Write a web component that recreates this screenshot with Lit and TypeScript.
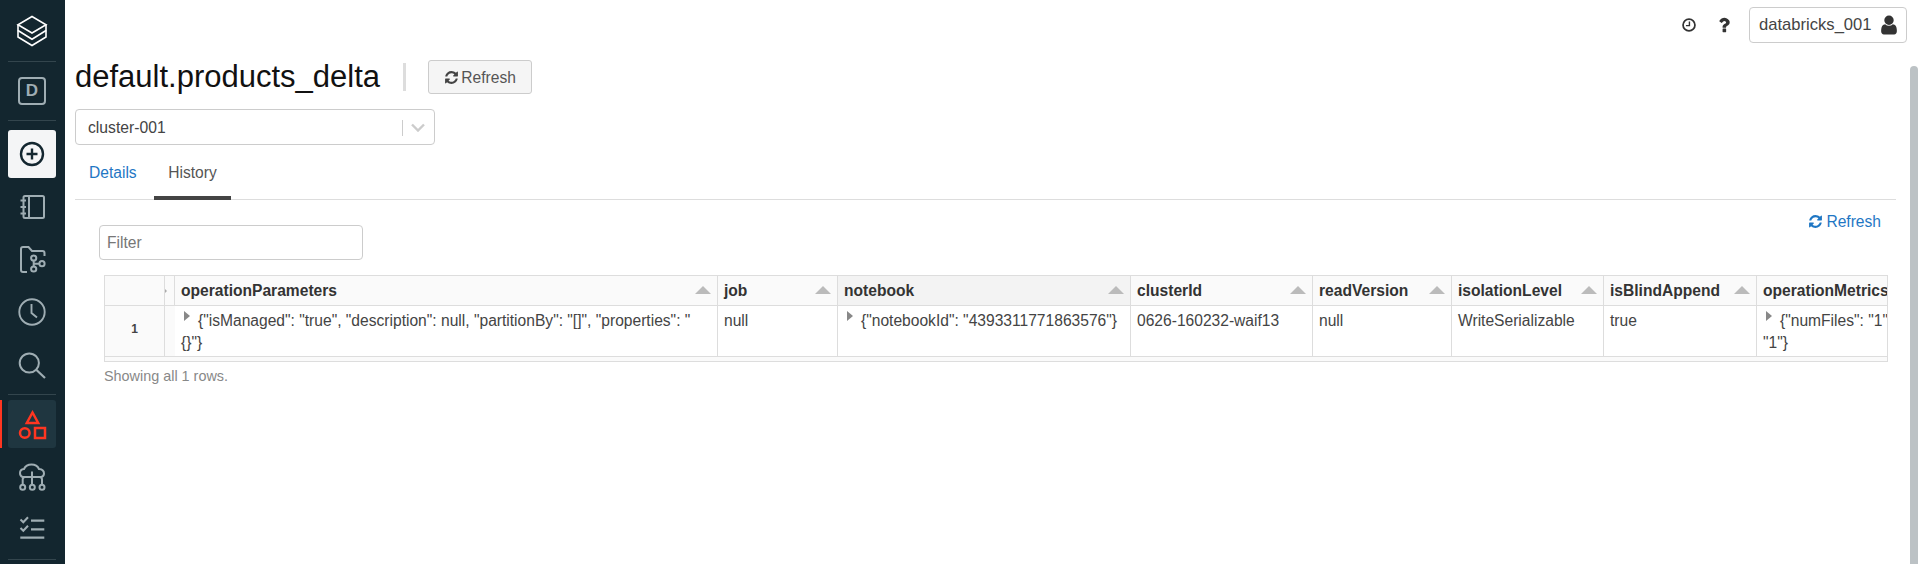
import { LitElement, html, css, svg } from "lit";
import { customElement } from "lit/decorators.js";

const REFRESH = "M1639 1056q0 5-1 7-64 268-268 434.5t-478 166.5q-146 0-282.5-55t-243.5-157l-129 129q-19 19-45 19t-45-19-19-45v-448q0-26 19-45t45-19h448q26 0 45 19t19 45-19 45l-137 137q71 66 161 102t187 36q134 0 250-65t186-179q11-17 53-117 8-23 30-23h192q13 0 22.5 9.5t9.5 22.5zm25-800v448q0 26-19 45t-45 19h-448q-26 0-45-19t-19-45 19-45l138-138q-148-137-349-137-134 0-250 65t-186 179q-11 17-53 117-8 23-30 23h-199q-13 0-22.5-9.5t-9.5-22.5v-7q65-268 270-434.5t480-166.5q146 0 284 55.5t245 156.5l130-129q19-19 45-19t45 19 19 45z";
const USER = "M1536 1399q0 109-62.5 187t-150.5 78h-854q-88 0-150.5-78t-62.5-187q0-85 8.5-160.5t31.5-152 58.5-131 94-89 134.5-34.5q131 128 313 128t313-128q76 0 134.5 34.5t94 89 58.5 131 31.5 152 8.5 160.5zm-256-887q0 159-112.5 271.5t-271.5 112.5-271.5-112.5-112.5-271.5 112.5-271.5 271.5-112.5 271.5 112.5 112.5 271.5z";
const QUESTION = "M1088 1256v240q0 16-12 28t-28 12h-240q-16 0-28-12t-12-28v-240q0-16 12-28t28-12h240q16 0 28 12t12 28zm316-600q0 54-15.5 101t-35 76.5-55 59.5-57.5 43.5-61 35.5q-41 23-68.5 65t-27.5 67q0 17-12 32.5t-28 15.5h-240q-15 0-25.5-18.5t-10.5-37.5v-45q0-83 65-156.5t143-108.5q59-27 84-56t25-76q0-42-46.5-74t-107.5-32q-65 0-108 29-35 25-107 115-13 16-31 16-12 0-25-8l-164-125q-13-10-15.5-25t5.5-28q160-266 464-266 80 0 161 31t146 83 106 127.5 41 158.5z";

const fa = (d: string, cls: string) => html`<svg class=${cls} viewBox="0 0 1792 1792" fill="currentColor"><path d=${d}></path></svg>`;

const ico = (body: unknown, cls = "ico") => html`<svg class=${cls} viewBox="0 0 32 32" fill="none" stroke="currentColor" stroke-width="2">${body}</svg>`;

const icons = {
  logo: svg`<path d="M16 1.5 L30 9.8 L16 18 L2 9.8 Z" stroke-width="1.6"/><path d="M2 9.8 V15.5 L16 24.3 L30 15.5 V9.8" stroke-width="1.6"/><path d="M2 15.5 V22 L16 30.5 L30 22 V15.5" stroke-width="1.6"/>`,
  plus: svg`<circle cx="16" cy="16" r="11" stroke-width="2.4"/><path d="M16 10.5 V21.5 M10.5 16 H21.5" stroke-width="2.4"/>`,
  book: svg`<rect x="7.5" y="5" width="20.5" height="22" rx="1.5"/><path d="M13 5 V27"/><path d="M4.5 9.5 H10 M4.5 16 H10 M4.5 22.5 H10"/>`,
  folder: svg`<path d="M11 29 H7 Q5 29 5 27 V6 Q5 4 7 4 H12.5 L16 8 H26.5 Q28.5 8 28.5 10 V13"/><circle cx="17.7" cy="15" r="2.6"/><circle cx="17.7" cy="26" r="2.6"/><circle cx="26" cy="20.7" r="2.6"/><path d="M17.7 17.6 V23.4 M18 20.7 H23.4"/>`,
  clock: svg`<circle cx="16" cy="16" r="12.7" stroke-width="1.9"/><path d="M15.5 8 V17 L21 21.5" stroke-width="1.9"/>`,
  search: svg`<circle cx="13.3" cy="15" r="9.6" stroke-width="2"/><path d="M20.5 22 L29 30" stroke-width="2.2"/>`,
  shapes: svg`<path d="M16.5 4.5 L22.2 15 H10.8 Z" stroke-width="2.5"/><circle cx="8.8" cy="25" r="4.8" stroke-width="2.5"/><rect x="19" y="20" width="10" height="10" stroke-width="2.5"/>`,
  cloud: svg`<path d="M6.5 16 Q4 15 4 12 Q4 8.5 8 8 Q10 3.5 15.5 3.5 Q21 3.5 23 8 Q28 8.5 28 12.5 Q28 15 25.5 16 H6.5 Z"/><path d="M16 10.5 V24 M6.7 23.5 V18.5 Q6.7 16 9 16 M26 23.5 V18.5 Q26 16 23.5 16"/><circle cx="6.7" cy="26.2" r="2.5"/><circle cx="16.3" cy="26.2" r="2.5"/><circle cx="26" cy="26.2" r="2.5"/>`,
  tasks: svg`<path d="M4.5 6.5 L7.3 9.3 L12 4.2 M4.5 15 L7.3 17.8 L12 12.7" stroke-width="2"/><path d="M15 7.7 H28.3 M15 16.3 H28.3 M4.3 24.7 H28.3" stroke-width="2.2"/>`,
};

const COLS: { name: string; hover?: boolean }[] = [
  { name: "operationParameters" },
  { name: "job" },
  { name: "notebook", hover: true },
  { name: "clusterId" },
  { name: "readVersion" },
  { name: "isolationLevel" },
  { name: "isBlindAppend" },
  { name: "operationMetrics" },
];

@customElement("app-root")
export class AppRoot extends LitElement {
  static styles = css`
    :host { display: block; height: 564px; overflow: hidden; font-family: "Liberation Sans", Arial, sans-serif; color: #333; background: #fff; position: relative; }
    * { box-sizing: border-box; }
    .page { display: flex; height: 564px; }
    .side { width: 65px; flex: none; background: #13262f; color: #9fadb3; display: flex; flex-direction: column; position: relative; }
    .sec { display: flex; flex-direction: column; align-items: center; gap: 4.5px; margin: 0 9px 0 8px; border-bottom: 1px solid #33454d; }
    .sec1 { height: 62px; justify-content: center; color: #fff; padding-top: 0; }
    .sec2 { height: 59px; justify-content: center; }
    .sec3 { height: 274px; padding-top: 9px; }
    .sec4 { height: 165px; padding-top: 5px; }
    .item { width: 48px; height: 48px; flex: none; display: flex; align-items: center; justify-content: center; border-radius: 3px; }
    .ico { width: 32px; height: 32px; display: block; }
    .logo { width: 32px; height: 32px; color: #fff; }
    .dbox { width: 28px; height: 28px; border: 2px solid #9fadb3; border-radius: 4px; font-size: 17px; font-weight: bold; display: flex; align-items: center; justify-content: center; color: #9fadb3; }
    .white { background: #f4f5f6; color: #13262f; }
    .act { background: #1f3640; color: #ff3621; }
    .redbar { position: absolute; left: 0; top: 400px; width: 2px; height: 48px; background: #ff3621; }
    .main { flex: 1; min-width: 0; position: relative; padding: 0 22px 0 10px; }
    .top { height: 50px; display: flex; align-items: center; justify-content: flex-end; margin-right: -11px; }
    .ti { color: #333; display: flex; align-items: center; justify-content: center; }
    .ti1 { width: 14px; height: 14px; margin-right: 17.5px; }
    .q { width: 20px; height: 20px; margin-right: 15.5px; }
    .user { width: 158px; height: 36px; border: 1px solid #ccc; border-radius: 4px; display: flex; align-items: center; justify-content: space-between; padding: 0 6px 0 9px; font-size: 16.6px; color: #444; }
    .user svg { width: 22px; height: 22px; color: #333; }
    .title { display: flex; align-items: center; height: 34px; margin-top: 10px; }
    h1 { margin: 0; font-size: 31px; font-weight: normal; color: #111; line-height: 34px; }
    .vr { width: 3px; height: 28px; background: #ddd; margin: 0 22px 0 23px; }
    .btn { width: 104px; height: 34px; border: 1px solid #ccc; border-radius: 3px; background: #f5f5f5; display: flex; align-items: center; justify-content: center; gap: 2px; font-size: 15.6px; color: #555; padding-top: 1px; }
    .btn svg { width: 15px; height: 15px; color: #444; }
    .sel { width: 360px; height: 36px; margin-top: 15px; border: 1px solid #ccc; border-radius: 4px; display: flex; align-items: center; padding: 1px 0 0 12px; font-size: 15.7px; color: #444; }
    .sel span { flex: 1; }
    .sel i { width: 1px; height: 16px; background: #ccc; }
    .sel svg { width: 14px; height: 9px; margin: 0 9px 0 8px; color: #ccc; }
    .tabs { display: flex; height: 55px; border-bottom: 1px solid #ddd; }
    .tab { font-size: 15.6px; padding: 19px 14px 0; height: 55px; color: #1f77c4; width: 79px; text-align: center; }
    .tab:first-child { width: 79px; padding-left: 14px; text-align: left; }
    .tab.on { color: #555; border-bottom: 4px solid #444; width: 77px; padding: 19px 0 0; }
    .tools { display: flex; justify-content: space-between; align-items: flex-start; padding: 13px 15px 0 24px; height: 75px; }
    .filter { width: 264px; height: 35px; margin-top: 12px; border: 1px solid #ccc; border-radius: 4px; padding-left: 7px; display: flex; align-items: center; font-size: 15.6px; color: #777; }
    .rf { display: flex; align-items: center; gap: 3px; font-size: 15.6px; color: #1f77c4; height: 17px; }
    .rf svg { width: 15px; height: 15px; }
    .table { margin-left: 29px; width: 1784px; border: 1px solid #ddd; height: 87px; overflow: hidden; font-size: 15.6px; display: grid; grid-template-columns: 60px 10px 543px 120px 293px 182px 139px 152px 153px 300px; grid-template-rows: 30px 51px; background: #fafafa; }
    .h { background: #fafafa; border-bottom: 1px solid #ddd; border-right: 1px solid #ddd; font-weight: bold; color: #333; display: flex; align-items: center; justify-content: space-between; padding: 0 6px; white-space: nowrap; }
    .h.hov { background: #f3f3f3; }
    .h:last-child { border-right: 0; }
    .h.narrow { padding: 0; }
    .sort { width: 0; height: 0; border-left: 8px solid transparent; border-right: 8px solid transparent; border-bottom: 8px solid #bbb; flex: none; margin-bottom: 2px; }
    .c { background: #fff; border-bottom: 1px solid #ddd; border-right: 1px solid #ddd; padding: 4px 6px 0; line-height: 22px; color: #444; white-space: nowrap; overflow: hidden; }
    .c.last { border-right: 0; }
    .num { background: #fafafa; font-size: 12px; font-weight: bold; text-align: center; padding: 12px 0 0 0; color: #444; }
    .narrow { background: #fafafa; }
    .tri { display: inline-block; width: 0; height: 0; border-top: 5px solid transparent; border-bottom: 5px solid transparent; border-left: 6px solid #888; margin: 0 8px 2px 3px; vertical-align: 3px; }
    .dot { display: block; width: 0; height: 0; border-top: 2px solid transparent; border-bottom: 2px solid transparent; border-left: 2px solid #aaa; }
    .foot { margin: 6px 0 0 29px; font-size: 14.4px; color: #888; }
    .scroll { position: absolute; top: 66px; right: 0; width: 8px; height: 498px; background: #bcc2c5; border-radius: 4px 4px 0 0; }
  `;

  render() {
    return html`
      <div class="page">
        <nav class="side">
          <div class="sec sec1">${ico(icons.logo, "logo")}</div>
          <div class="sec sec2"><div class="dbox">D</div></div>
          <div class="sec sec3">
            <div class="item white">${ico(icons.plus)}</div>
            <div class="item">${ico(icons.book)}</div>
            <div class="item">${ico(icons.folder)}</div>
            <div class="item">${ico(icons.clock)}</div>
            <div class="item">${ico(icons.search)}</div>
          </div>
          <div class="sec sec4">
            <div class="item act">${ico(icons.shapes)}</div>
            <div class="item">${ico(icons.cloud)}</div>
            <div class="item">${ico(icons.tasks)}</div>
          </div>
          <div class="redbar"></div>
        </nav>
        <main class="main">
          <div class="top">
            <svg class="ti ti1" viewBox="0 0 16 16" fill="none" stroke="currentColor" stroke-width="2"><circle cx="8" cy="8" r="6.8"/><path d="M8.5 4 V8.7 H4.5" stroke-width="1.6"/></svg>
            ${fa(QUESTION, "ti q")}
            <div class="user"><span>databricks_001</span>${fa(USER, "")}</div>
          </div>
          <div class="title">
            <h1>default.products_delta</h1>
            <div class="vr"></div>
            <div class="btn">${fa(REFRESH, "")}<span>Refresh</span></div>
          </div>
          <div class="sel">
            <span>cluster-001</span><i></i>
            <svg viewBox="0 0 14 9" fill="none" stroke="currentColor" stroke-width="2.4"><path d="M1 1.5 L7 7.5 L13 1.5"/></svg>
          </div>
          <div class="tabs">
            <div class="tab">Details</div>
            <div class="tab on">History</div>
          </div>
          <div class="tools">
            <div class="filter">Filter</div>
            <div class="rf">${fa(REFRESH, "")}<span>Refresh</span></div>
          </div>
          <div class="table">
            <div class="h"></div>
            <div class="h narrow"><span class="dot"></span></div>
            ${COLS.map(
              (c) => html`<div class="h ${c.hover ? "hov" : ""}"><span>${c.name}</span>${c.name === "operationMetrics" ? "" : html`<span class="sort"></span>`}</div>`
            )}
            <div class="c num">1</div>
            <div class="c narrow"></div>
            <div class="c"><span class="tri"></span>{"isManaged": "true", "description": null, "partitionBy": "[]", "properties": "<br />{}"}</div>
            <div class="c">null</div>
            <div class="c"><span class="tri"></span>{"notebookId": "4393311771863576"}</div>
            <div class="c">0626-160232-waif13</div>
            <div class="c">null</div>
            <div class="c">WriteSerializable</div>
            <div class="c">true</div>
            <div class="c last"><span class="tri"></span>{"numFiles": "1",<br />"1"}</div>
          </div>
          <div class="foot">Showing all 1 rows.</div>
          <div class="scroll"></div>
        </main>
      </div>
    `;
  }
}
